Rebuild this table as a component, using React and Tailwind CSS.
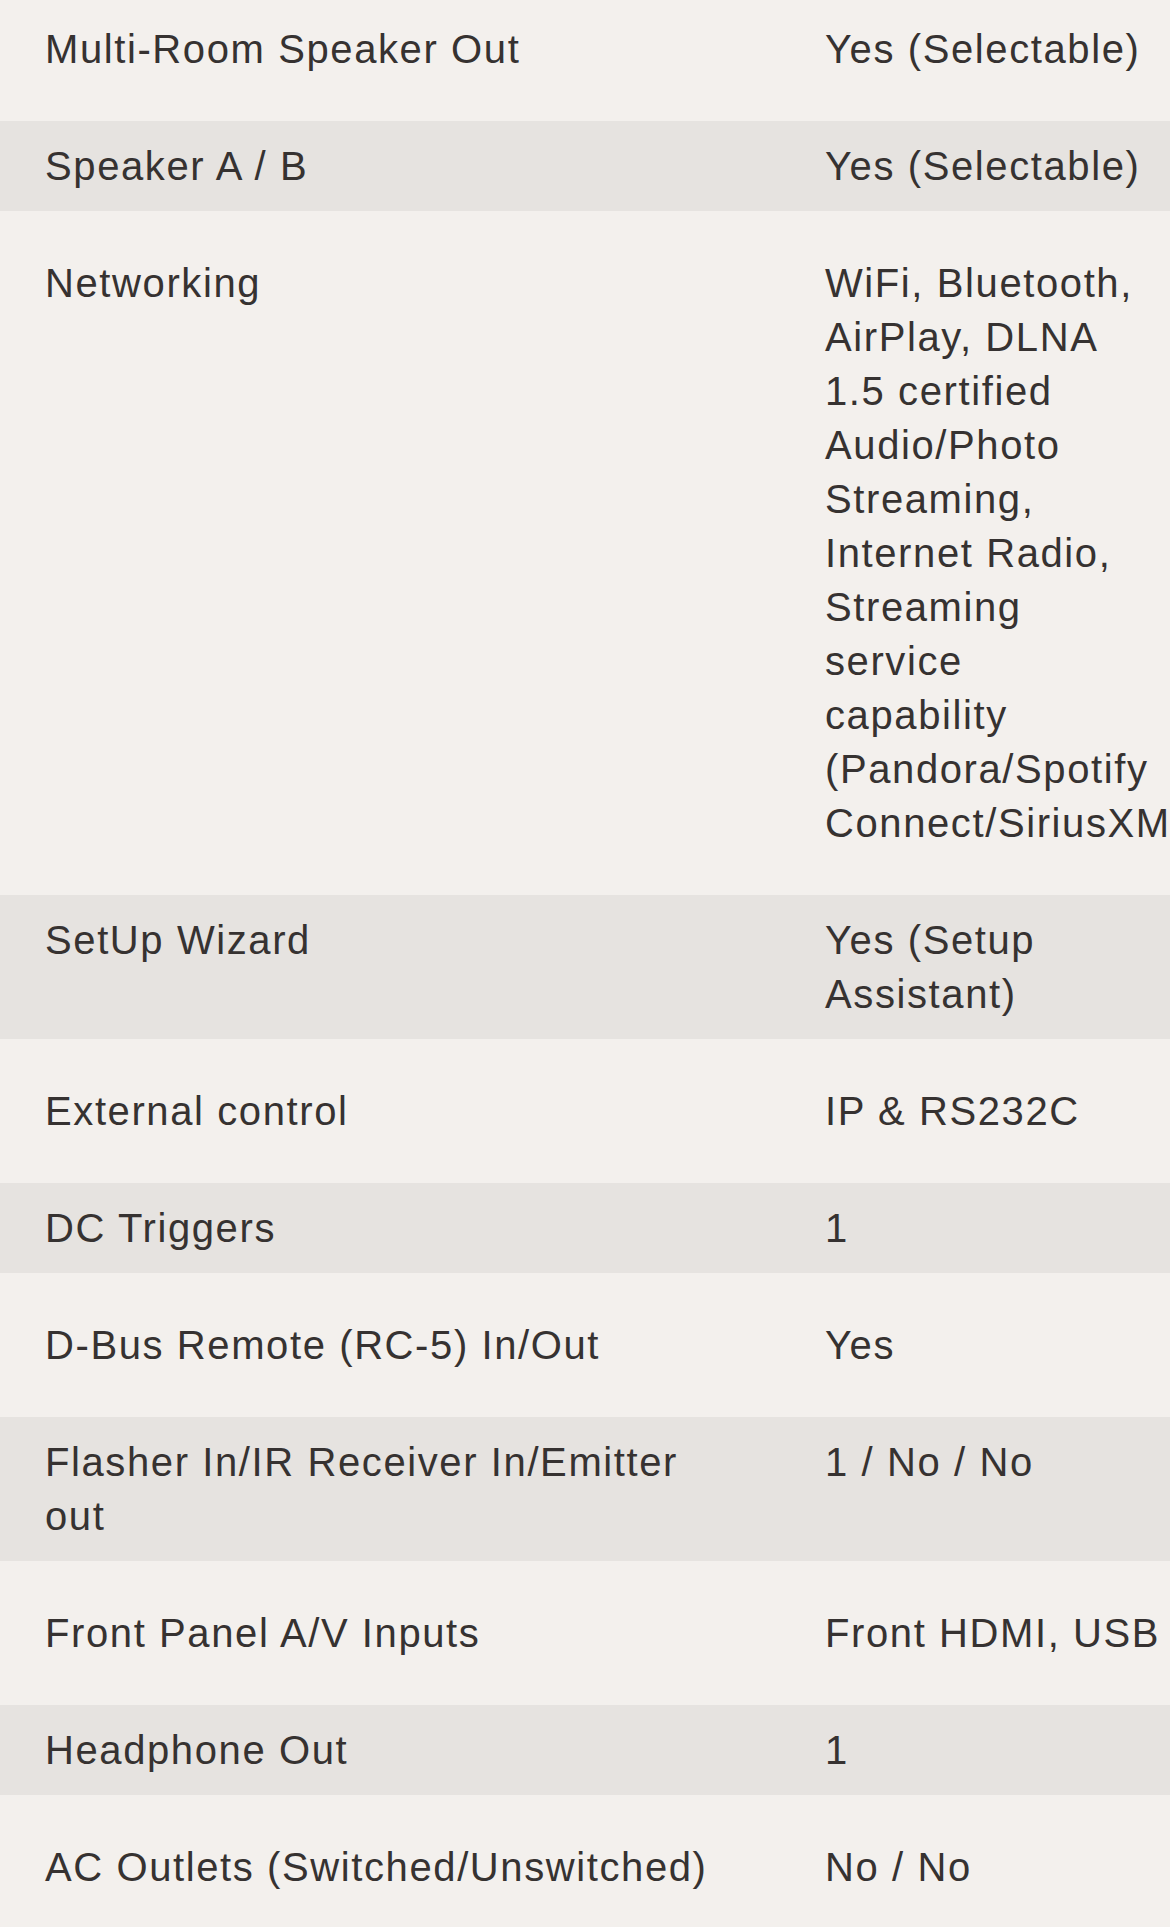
import React from "react";

const specs = [
  { label: "Multi-Room Speaker Out", value: "Yes (Selectable)" },
  { label: "Speaker A / B", value: "Yes (Selectable)" },
  {
    label: "Networking",
    value:
      "WiFi, Bluetooth, AirPlay, DLNA 1.5 certified Audio/Photo Streaming, Internet Radio, Streaming service capability (Pandora/Spotify Connect/SiriusXM)",
  },
  { label: "SetUp Wizard", value: "Yes (Setup Assistant)" },
  { label: "External control", value: "IP & RS232C" },
  { label: "DC Triggers", value: "1" },
  { label: "D-Bus Remote (RC-5) In/Out", value: "Yes" },
  { label: "Flasher In/IR Receiver In/Emitter out", value: "1 / No / No" },
  { label: "Front Panel A/V Inputs", value: "Front HDMI, USB" },
  { label: "Headphone Out", value: "1" },
  { label: "AC Outlets (Switched/Unswitched)", value: "No / No" },
];

export default function App() {
  return (
    <div
      className="w-[1170px] h-[1927px] overflow-hidden bg-[#f3f0ed] text-[#363231] text-[40px] leading-[54px] tracking-[1.6px]"
      style={{ fontFamily: '"Liberation Sans", Arial, sans-serif' }}
    >
      {specs.map((row, i) => {
        const dark = i % 2 === 1;
        // first row is scrolled partly out of view
        const pad = dark ? "py-[18px]" : i === 0 ? "pt-[22px] pb-[45px]" : "py-[45px]";
        const wrap = row.value.length < 20 ? "whitespace-nowrap" : "";
        return (
          <div
            key={row.label}
            className={`flex ${pad} ${dark ? "bg-[#e6e3e0]" : "bg-[#f3f0ed]"}`}
          >
            <div className="w-[825px] shrink-0 pl-[45px] pr-[100px]">{row.label}</div>
            <div className={`w-[330px] shrink-0 ${wrap}`}>{row.value}</div>
          </div>
        );
      })}
    </div>
  );
}
